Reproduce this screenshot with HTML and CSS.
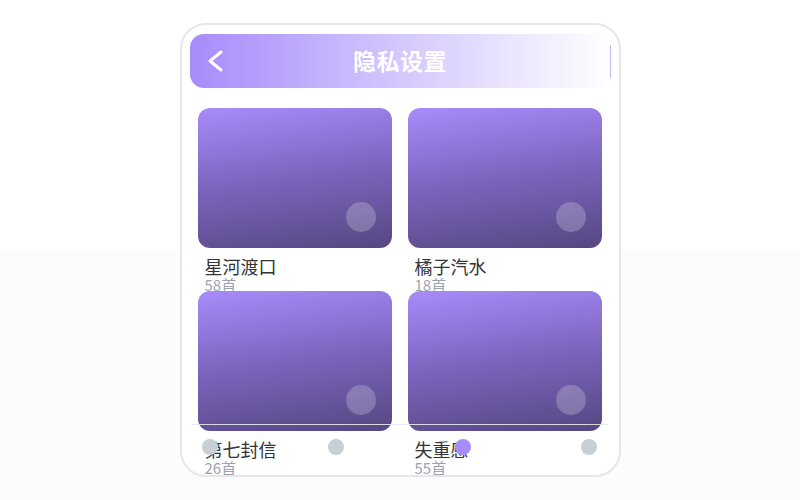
FILE: index.html
```html
<!DOCTYPE html>
<html lang="zh">
<head>
<meta charset="utf-8">
<link rel="stylesheet" href="styles.css">
</head>
<body>
<div class="phone">
  <div class="header">
    <svg class="back" width="24" height="24" viewBox="0 0 24 24"><path d="M17 3 L6 12 L17 21" fill="none" stroke="#fff" stroke-width="3" stroke-linecap="round" stroke-linejoin="round"/></svg>
    <div class="title">隐私设置</div>
    <span class="spacer"></span>
  </div>
  <div class="grid">
    <div class="item"><div class="card"><span class="play"></span></div><div class="name">星河渡口</div><div class="count">58首</div></div>
    <div class="item"><div class="card"><span class="play"></span></div><div class="name">橘子汽水</div><div class="count">18首</div></div>
    <div class="item"><div class="card"><span class="play"></span></div><div class="name">第七封信</div><div class="count">26首</div></div>
    <div class="item"><div class="card"><span class="play"></span></div><div class="name">失重感</div><div class="count">55首</div></div>
  </div>
  <div class="tabbar">
    <span class="dot"></span>
    <span class="dot"></span>
    <span class="dot active"></span>
    <span class="dot"></span>
  </div>
</div>
</body>
</html>
```
FILE: styles.css
```css
html {
  background: linear-gradient(to bottom, #ffffff 250px, #fcfcfc 250px);
  height: 100%;
}
body {
  margin: 0;
  height: 100%;
  display: flex;
  align-items: center;
  justify-content: center;
  font-family: "Noto Sans CJK SC", "Noto Sans", sans-serif;
}
.phone {
  position: relative;
  width: 437px;
  height: 450px;
  border: 2px solid #e6e6eb;
  border-radius: 26px;
  background: #fff;
  overflow: hidden;
}
.header {
  position: relative;
  margin: 9px 8px 0;
  height: 54px;
  border-radius: 14px;
  background: linear-gradient(to right, #a78bfa, #d4c8fd 50%, #ffffff);
  display: grid;
  grid-template-columns: 24px 1fr 24px;
  align-items: center;
  padding: 0 14px;
}
.header::after {
  content: "";
  position: absolute;
  right: 0;
  top: 11px;
  bottom: 10px;
  width: 1px;
  background: #c4b3fc;
}
.back { display: block; }
.title {
  text-align: center;
  color: #fff;
  font-size: 23px;
  line-height: 30px;
  margin-top: -2px;
  font-weight: 700;
  letter-spacing: 0.5px;
}
.grid {
  display: grid;
  grid-template-columns: 194px 194px;
  column-gap: 16px;
  padding: 20px 16px 0;
  grid-auto-rows: 183px;
}
.item {
  min-height: 0;
}
.card {
  position: relative;
  height: 140px;
  border-radius: 12px;
  background: linear-gradient(172deg, #a88bfa 0%, #7b64bd 50%, #564781 100%);
}
.play {
  position: absolute;
  right: 16px;
  bottom: 16px;
  width: 30px;
  height: 30px;
  border-radius: 50%;
  background: rgba(255, 255, 255, 0.22);
}
.name {
  margin-top: 8px;
  padding-left: 7px;
  font-size: 18px;
  line-height: 20px;
  color: #333338;
}
.count {
  padding-left: 7px;
  font-size: 15px;
  line-height: 17px;
  color: #9ca3af;
}
.tabbar {
  position: absolute;
  left: 10px;
  right: 11px;
  top: 399px;
  border-top: 1px solid rgba(232, 232, 238, 0.9);
  padding: 14px 10px 0;
  display: flex;
  justify-content: space-between;
}
.dot {
  width: 16px;
  height: 16px;
  border-radius: 50%;
  background: #c9cdd4;
}
.dot.active {
  background: #a78bfa;
}
```
